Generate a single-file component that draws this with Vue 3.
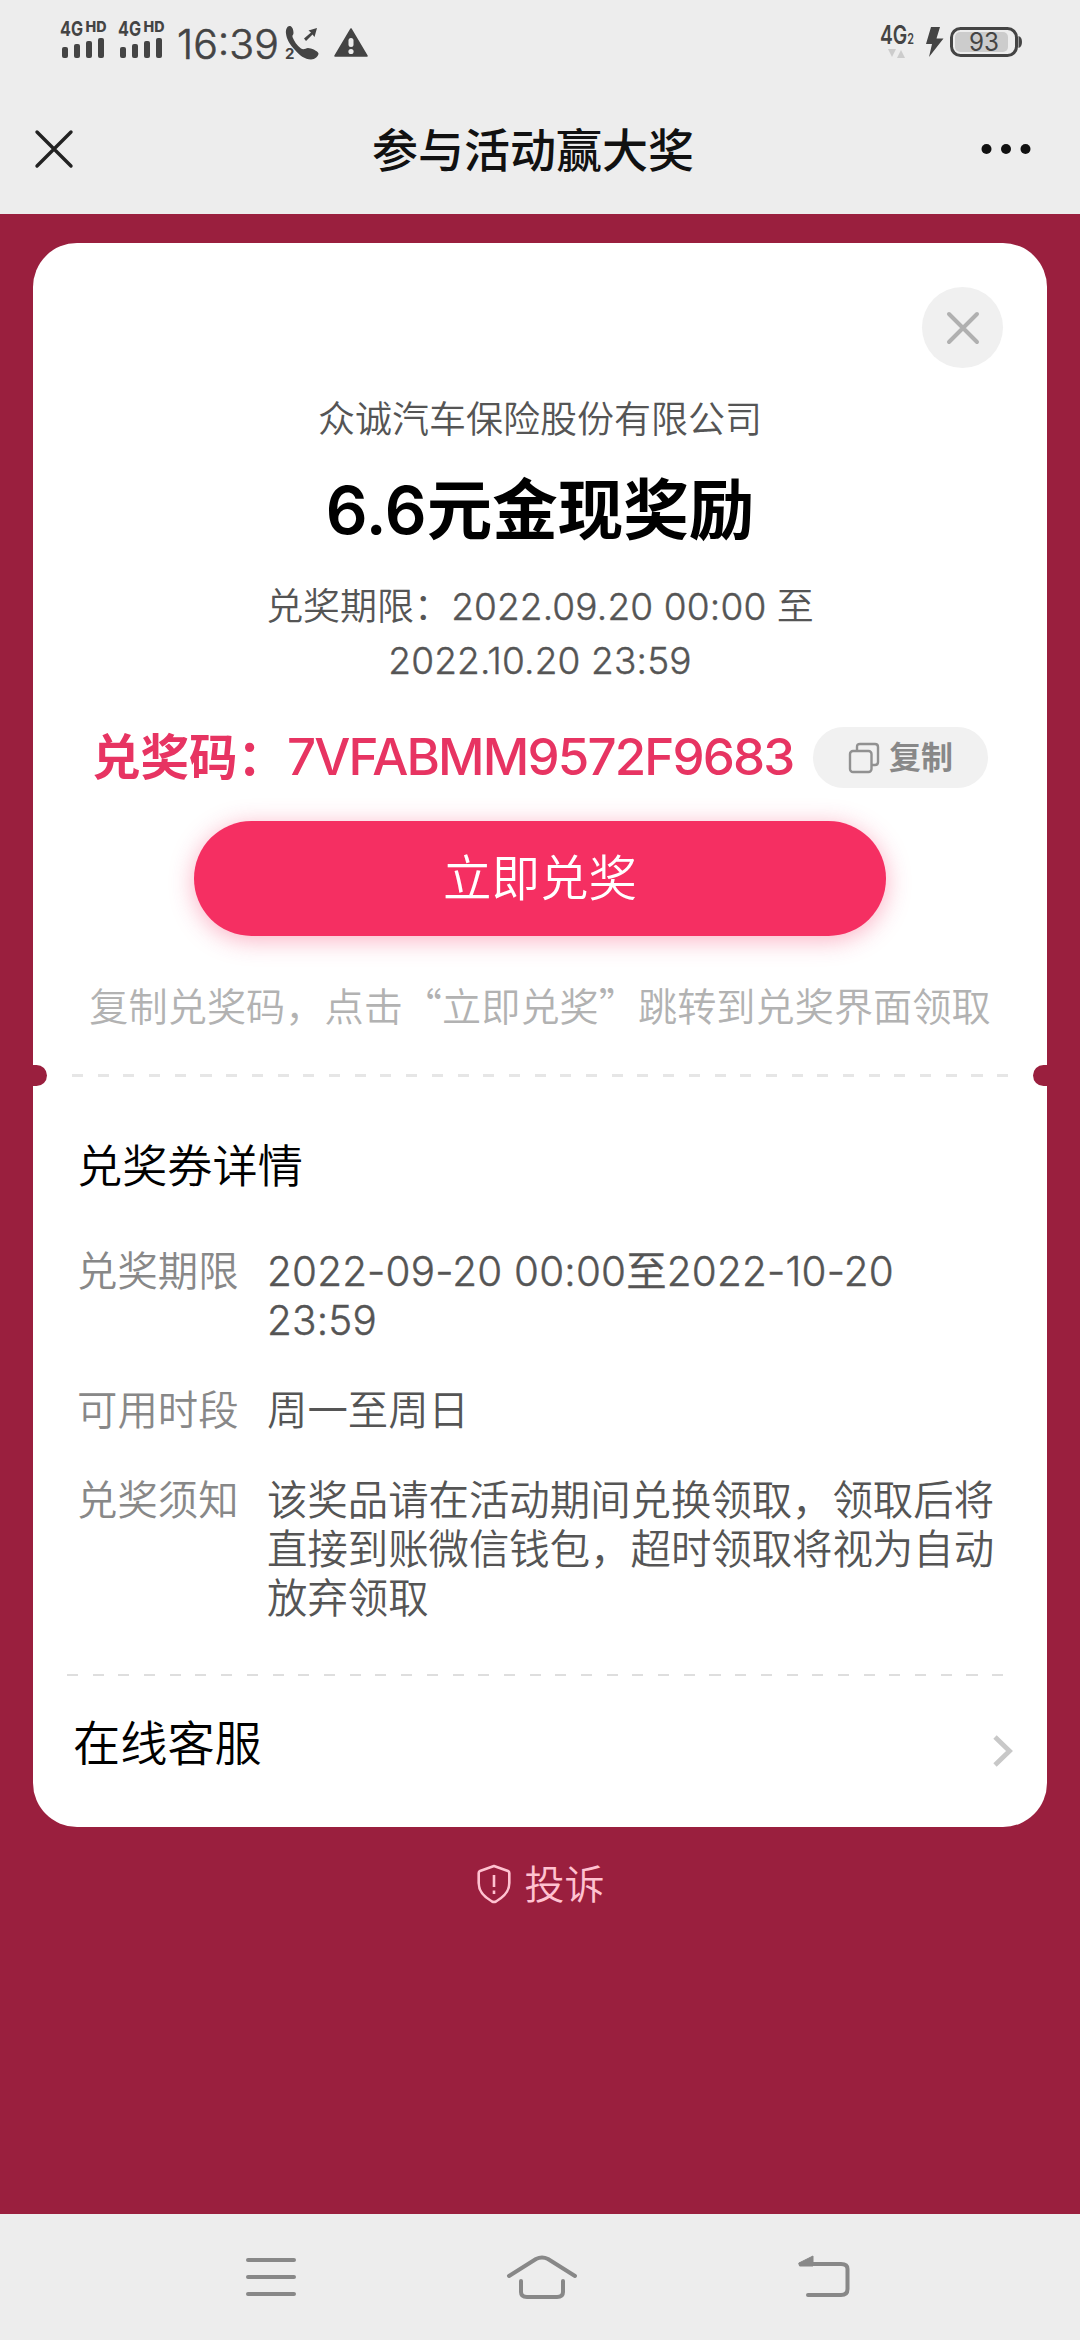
<script setup>
const sims = [0, 1]
const details = [
  { label: '兑奖期限', value: '2022-09-20 00:00至2022-10-20 23:59', numeric: true },
  { label: '可用时段', value: '周一至周日' },
  { label: '兑奖须知', value: '该奖品请在活动期间兑换领取，领取后将直接到账微信钱包，超时领取将视为自动放弃领取' },
]
</script>

<template>
  <div class="screen">
    <header class="top">
      <div class="status">
        <svg v-for="s in sims" :key="s" class="sim" width="48" height="46" viewBox="0 -8 48 46">
          <text x="0" y="16" font-size="20" textLength="23" lengthAdjust="spacingAndGlyphs">4G</text>
          <text class="hd" x="25.500" y="12" font-size="14.5" textLength="21" lengthAdjust="spacingAndGlyphs">HD</text>
          <rect x="2" y="27" width="6" height="11" rx="2" />
          <rect x="14" y="24" width="6" height="14" rx="2" />
          <rect x="26" y="21" width="6" height="17" rx="2" />
          <rect x="38" y="18" width="6" height="20" rx="2" />
        </svg>
        <span class="time">16:39</span>
        <svg class="call" width="35" height="40" viewBox="0 0 35 40">
          <path d="M1 8.500C.500 4 2.500 .500 5 1C7.500 1.500 8.500 5 8.500 8C8.500 10 7 10 7.500 12C9 16 12 20.500 16 23.500C19 25.500 20.500 23 23 23C26 23 33 26 33.500 28.500C33.500 31 30 34.500 26 34.500C20 34.500 14 30 10 25C5 20 1.500 14 1 8.500Z" />
          <path d="M19 13.500L26 7.500L23.500 5.500L32 3L29.500 12L27.500 9.500L21 16Z" />
          <text x="0" y="33.500" font-size="15">2</text>
        </svg>
        <svg class="warn" width="34" height="29" viewBox="0 0 34 29">
          <path d="M17 1L33 28H1Z" stroke="#444" stroke-width="1.500" stroke-linejoin="round" />
          <rect x="14.500" y="10" width="5" height="9" rx="2.500" fill="#ededed" />
          <circle cx="17" cy="23.500" r="2.600" fill="#ededed" />
        </svg>
        <svg class="net" width="36" height="42" viewBox="0 -8 36 42">
          <text x="0" y="18.500" font-size="25" textLength="34" lengthAdjust="spacingAndGlyphs">4G<tspan font-size="14">2</tspan></text>
          <path d="M8 24H16L12 32Z M17 33L21 25L25 33Z" fill="#ccc" />
        </svg>
        <svg class="bolt" width="19" height="31" viewBox="0 0 19 31">
          <path d="M6 0H15L11.500 11.500H18.500L4 30L7 17H1Z" />
        </svg>
        <svg class="battery" width="74" height="32" viewBox="0 0 74 32">
          <rect x="6" y="6" width="53" height="20" rx="5" fill="#ccc" />
          <rect x="2.500" y="2.500" width="65" height="27" rx="9" fill="none" stroke="#444" stroke-width="3" />
          <path d="M69.500 10Q73 11 73 16Q73 21 69.500 22Z" />
          <text x="20" y="25" font-size="25" textLength="30" lengthAdjust="spacingAndGlyphs">93</text>
        </svg>
      </div>
      <div class="nav">
        <svg width="40" height="40" viewBox="0 0 40 40" fill="none" stroke="#222" stroke-width="3.400" stroke-linecap="round">
          <path d="M3 3L37 37M37 3L3 37" />
        </svg>
        <h1>参与活动赢大奖</h1>
        <svg width="50" height="12" viewBox="0 0 50 12" fill="#111">
          <circle cx="5.500" cy="6" r="5" /><circle cx="25" cy="6" r="5" /><circle cx="44.500" cy="6" r="5" />
        </svg>
      </div>
    </header>

    <main>
      <section class="card">
        <button class="close" aria-label="关闭">
          <svg width="34" height="34" viewBox="0 0 34 34" fill="none" stroke="#b0b0b0" stroke-width="4" stroke-linecap="round">
            <path d="M3 3L31 31M31 3L3 31" />
          </svg>
        </button>
        <p class="company">众诚汽车保险股份有限公司</p>
        <h2><span class="amount">6.6</span>元金现奖励</h2>
        <p class="period">兑奖期限：<span class="num">2022.09.20 00:00</span> 至<br /><span class="num">2022.10.20 23:59</span></p>
        <div class="code-row">
          <span class="code-label">兑奖码：</span><span class="code">7VFABMM9572F9683</span>
          <button class="copy">
            <svg width="32" height="32" viewBox="0 0 32 32" fill="none" stroke="#919191" stroke-width="2.400">
              <path d="M9 8V5Q9 2 12 2H27Q30 2 30 5V20Q30 23 27 23H24" />
              <rect x="2" y="9" width="21.500" height="21" rx="3" />
            </svg>
            <span>复制</span>
          </button>
        </div>
        <button class="redeem">立即兑奖</button>
        <p class="hint">复制兑奖码，点击“立即兑奖”跳转到兑奖界面领取</p>

        <div class="tear"><i class="notch left"></i><div class="dashes"></div><i class="notch right"></i></div>

        <h3>兑奖券详情</h3>
        <dl>
          <div v-for="d in details" :key="d.label" class="detail">
            <dt>{{ d.label }}</dt>
            <dd :class="{ numeric: d.numeric }">{{ d.value }}</dd>
          </div>
        </dl>
        <div class="dashes lower"></div>
        <div class="service">
          <span>在线客服</span>
          <svg width="22" height="34" viewBox="0 0 22 34" fill="none" stroke="#c8c8c8" stroke-width="4.800">
            <path d="M3 3L17.500 17L3 31" />
          </svg>
        </div>
      </section>
      <div class="complaint">
        <svg width="34" height="40" viewBox="0 0 34 40" fill="none" stroke="#ffc2d0" stroke-width="2.600" stroke-linejoin="round">
          <path d="M17 2L31 7Q32.300 7.500 32.300 9V19C32.300 29 25 34 19 37.500Q17 38.500 15 37.500C9 34 1.700 29 1.700 19V9Q1.700 7.500 3 7Z" />
          <path d="M17 11V23M17 26.500V30" />
        </svg>
        <span>投诉</span>
      </div>
    </main>

    <footer>
      <svg width="50" height="44" viewBox="0 0 50 44">
        <path d="M2 5H48M2 22H48M2 39H48" />
      </svg>
      <svg class="home" width="72" height="46" viewBox="0 0 72 46">
        <path d="M3 22L30 5Q36 2 42 5L69 22" />
        <path d="M15 27V38Q15 43 21 43H51Q57 43 57 38V27" />
      </svg>
      <svg width="52" height="44" viewBox="0 0 52 44">
        <path d="M3 9H43Q49.500 9 49.500 14V34Q49.500 40 43 40H10" />
        <path class="tip" d="M1 8L15 1V11H2Z" />
      </svg>
    </footer>
  </div>
</template>

<style>
body { margin: 0; }
</style>

<style scoped>
.screen {
  width: 1080px;
  height: 2340px;
  display: flex;
  flex-direction: column;
  overflow: hidden;
  background: #9a1f3e;
  font-family: Inter, "Noto Sans CJK SC", sans-serif;
  color: #555;
}
h1, h2, h3, p, dl, dt, dd { margin: 0; font-weight: 400; }
button { border: 0; padding: 0; font: inherit; }
svg { display: block; flex: none; overflow: visible; }
.top { height: 214px; background: #ededed; }
.status { display: flex; align-items: flex-start; height: 86px; padding-left: 60px; fill: #444; color: #444; }
.status text { font-family: Inter, sans-serif; font-weight: 700; }
.status .hd { font-weight: 800; }
.status .net text { font-weight: 600; }
.status .battery text { font-weight: 400; }
.sim { margin: 12px 10px 0 0; }
.time { width: 107px; padding-top: 20px; font-size: 41px; line-height: 48px; letter-spacing: 0; font-weight: 300; -webkit-text-stroke: .6px #444; text-indent: 1px; }
.call { margin-top: 25px; margin-left: 2px; }
.warn { margin: 28px 0 0 14px; }
.net { margin: 17px 0 0 auto; }
.bolt { margin: 27px 0 0 9px; }
.battery { margin: 26px 57px 0 5px; }
.nav { display: flex; align-items: center; justify-content: space-between; height: 126px; padding: 0 49px 0 34px; }
.nav h1 { padding: 2px 0 0 11px; font-size: 46px; font-weight: 500; line-height: 60px; color: #111; }
main { flex: 1; padding: 29px 33px 0; }
.card { height: 1584px; border-radius: 44px; background: #fff; display: flex; flex-direction: column; text-align: center; }
.close { width: 81px; height: 81px; margin: 44px 44px 0 auto; border-radius: 50%; background: #f0f0f0; display: flex; align-items: center; justify-content: center; }
.company { margin-top: 25px; font-size: 37px; line-height: 54px; font-weight: 350; }
h2 { margin-top: 27px; font-size: 65.500px; line-height: 74px; font-weight: 700; color: #000; }
.amount { font-weight: 600; }
.period { margin-top: 32px; font-size: 37px; line-height: 54px; font-weight: 350; }
.num { letter-spacing: .15px; -webkit-text-stroke: .4px #555; }
.code-row { display: flex; align-items: center; height: 61px; margin: 39px 59px 0 59px; color: #e73462; font-size: 48.500px; font-weight: 700; white-space: nowrap; }
.code-label { width: 195px; text-align: left; padding-bottom: 8px; }
.code { width: 504px; padding-bottom: 3px; font-size: 51px; font-weight: 550; text-align: left; letter-spacing: -1.850px; }
.copy { display: flex; align-items: center; justify-content: center; gap: 9px; width: 175px; height: 61px; margin-left: auto; border-radius: 31px; background: #f1f1f1; color: #888; font-size: 32px; font-weight: 700; }
.copy span { padding-bottom: 5px; }
.redeem { width: 692px; height: 115px; margin: 33px auto 0; border-radius: 58px; background: #f52f62; box-shadow: 0 4px 24px rgba(245, 47, 98, .38); color: #fff; font-size: 48.500px; line-height: 110px; font-weight: 350; }
.hint { margin-top: 41px; font-family: "Noto Sans CJK SC", sans-serif; font-size: 39.200px; line-height: 54px; font-weight: 350; color: #b2b2b2; white-space: nowrap; }
.tear { display: flex; align-items: center; height: 21px; margin-top: 34px; }
.notch { width: 14px; height: 21px; background: #9a1f3e; }
.left { border-radius: 0 11px 11px 0; }
.right { border-radius: 11px 0 0 11px; }
.dashes { flex: 1; height: 3px; margin: 0 25px; background: repeating-linear-gradient(90deg, #e6e6e6 0 11px, transparent 11px 25.700px); }
.dashes.lower { flex: none; height: 2px; margin: 51.500px 43px 0 34px; background: repeating-linear-gradient(90deg, #dedede 0 11px, transparent 11px 25.700px); }
h3 { margin: 54px 0 0 44px; font-size: 45.200px; line-height: 54px; color: #000; text-align: left; font-weight: 350; }
dl { display: flex; flex-direction: column; gap: 41px; margin: 52.500px 40px 0 44px; font-size: 40.400px; line-height: 49px; text-align: left; }
.detail { display: flex; }
dt, dd { font-weight: 350; }
dt { width: 190px; flex: none; color: #888; }
dd { flex: 1; }
.numeric { letter-spacing: .2px; -webkit-text-stroke: .4px #555; }
.service { display: flex; justify-content: space-between; padding: 38px 33px 0 40px; font-size: 47.200px; line-height: 60px; color: #000; font-weight: 350; }
.service svg { margin-top: 20px; }
.complaint { display: flex; align-items: center; justify-content: center; gap: 14px; height: 60px; margin: 27px 0 0 1px; color: #ffc2d0; font-size: 40px; font-weight: 350; }
.complaint span { padding-bottom: 5px; }
footer { display: flex; align-items: center; justify-content: space-between; height: 126px; padding: 0 230px 0 246px; background: #ededed; fill: none; stroke: #888; stroke-width: 4; stroke-linecap: round; stroke-linejoin: round; }
.home { margin-right: 10px; }
.tip { fill: #888; stroke-width: 1; }
</style>
